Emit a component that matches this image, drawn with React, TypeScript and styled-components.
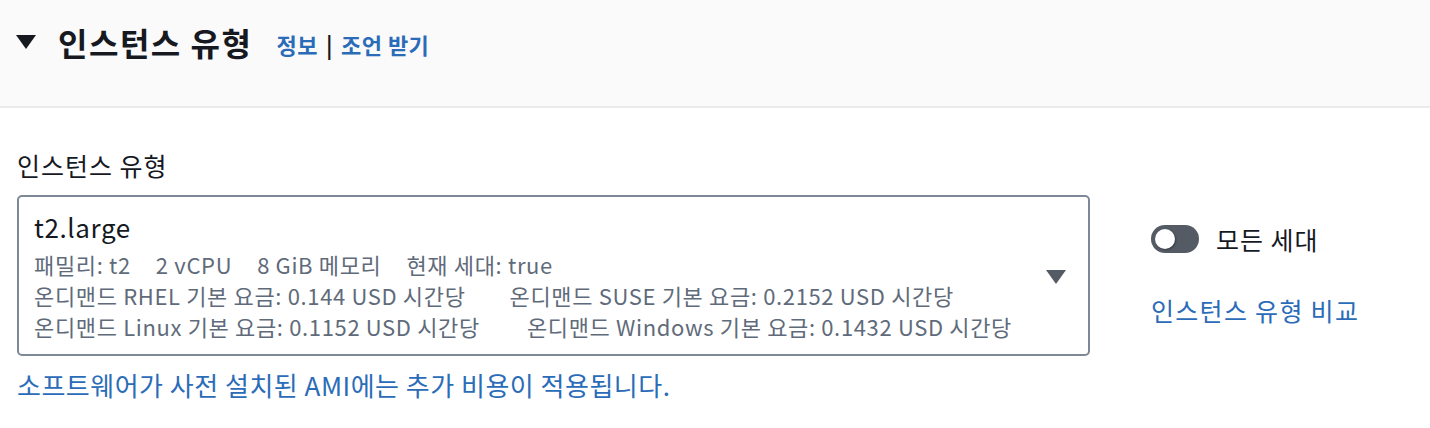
import styled, { createGlobalStyle } from "styled-components";

const GlobalStyle = createGlobalStyle`
  body {
    margin: 0;
    background: #ffffff;
    font-family: "Noto Sans CJK KR", "Noto Sans", sans-serif;
    color: #16191f;
  }
`;

const Header = styled.div`
  height: 108px;
  box-sizing: border-box;
  background: #fafafa;
  border-bottom: 2px solid #e9ebed;
  padding: 22px 16px 0;
`;

const HeaderRow = styled.div`
  display: flex;
  align-items: center;
  height: 40px;
`;

const Caret = styled.span`
  width: 0;
  height: 0;
  border-left: 10px solid transparent;
  border-right: 10px solid transparent;
  border-top: 14px solid #16191f;
  margin-right: 22px;
`;

const Title = styled.h2`
  margin: 0;
  font-size: 32px;
  font-weight: 700;
  line-height: 40px;
  letter-spacing: 1.5px;
  color: #16191f;
`;

const HeaderLinks = styled.div`
  margin-left: 24px;
  font-size: 22px;
  font-weight: 700;
  letter-spacing: 0.5px;
  display: flex;
  align-items: center;
  gap: 8px;
  padding-top: 4px;
`;

const Link = styled.a`
  color: #2b6cb8;
  text-decoration: none;
  cursor: pointer;
`;

const Sep = styled.span`
  color: #16191f;
`;

const Body = styled.div`
  display: flex;
  padding: 41px 17px 0;
`;

const Field = styled.div`
  width: 1073px;
`;

const Label = styled.div`
  font-size: 25px;
  line-height: 32px;
  letter-spacing: 1px;
  margin-bottom: 14px;
`;

const SelectBox = styled.div`
  position: relative;
  box-sizing: border-box;
  border: 2px solid #7d8998;
  border-radius: 5px;
  padding: 14px 60px 12px 15px;
`;

const Value = styled.div`
  font-size: 26px;
  line-height: 32px;
  letter-spacing: 0.6px;
  color: #16191f;
  margin-bottom: 6px;
`;

const DetailLine = styled.div<{ $gap: number }>`
  display: flex;
  gap: ${(p) => p.$gap}px;
  font-size: 22px;
  line-height: 31px;
  letter-spacing: 0.65px;
  color: #5f6b7a;
  white-space: nowrap;
`;

const DropCaret = styled.span`
  position: absolute;
  right: 22px;
  top: 50%;
  margin-top: -6px;
  width: 0;
  height: 0;
  border-left: 10px solid transparent;
  border-right: 10px solid transparent;
  border-top: 14px solid #545b64;
`;

const Note = styled.div`
  margin-top: 13px;
  font-size: 26px;
  line-height: 32px;
  letter-spacing: 0.5px;
`;

const Side = styled.div`
  margin-left: 61px;
  padding-top: 72px;
  display: flex;
  flex-direction: column;
`;

const ToggleRow = styled.label`
  display: flex;
  align-items: center;
  gap: 17px;
  font-size: 25px;
  letter-spacing: 1px;
  color: #16191f;
`;

const Track = styled.span`
  position: relative;
  width: 48px;
  height: 28px;
  border-radius: 14px;
  background: #545b64;
`;

const Knob = styled.span`
  position: absolute;
  left: 4px;
  top: 4px;
  width: 20px;
  height: 20px;
  border-radius: 50%;
  background: #ffffff;
  box-shadow: 1px 1px 2px rgba(0, 0, 0, 0.35);
`;

const SideLink = styled.div`
  margin-top: 37px;
  font-size: 25px;
  line-height: 32px;
  letter-spacing: 1.3px;
`;

const details: { gap: number; items: string[] }[] = [
  { gap: 25, items: ["패밀리: t2", "2 vCPU", "8 GiB 메모리", "현재 세대: true"] },
  {
    gap: 44,
    items: ["온디맨드 RHEL 기본 요금: 0.144 USD 시간당", "온디맨드 SUSE 기본 요금: 0.2152 USD 시간당"],
  },
  {
    gap: 47,
    items: ["온디맨드 Linux 기본 요금: 0.1152 USD 시간당", "온디맨드 Windows 기본 요금: 0.1432 USD 시간당"],
  },
];

export default function App() {
  return (
    <>
      <GlobalStyle />
      <Header>
        <HeaderRow>
          <Caret />
          <Title>인스턴스 유형</Title>
          <HeaderLinks>
            <Link>정보</Link>
            <Sep>|</Sep>
            <Link>조언 받기</Link>
          </HeaderLinks>
        </HeaderRow>
      </Header>
      <Body>
        <Field>
          <Label>인스턴스 유형</Label>
          <SelectBox>
            <Value>t2.large</Value>
            {details.map((line, i) => (
              <DetailLine key={i} $gap={line.gap}>
                {line.items.map((t) => (
                  <span key={t}>{t}</span>
                ))}
              </DetailLine>
            ))}
            <DropCaret />
          </SelectBox>
          <Note>
            <Link>소프트웨어가 사전 설치된 AMI에는 추가 비용이 적용됩니다.</Link>
          </Note>
        </Field>
        <Side>
          <ToggleRow>
            <Track>
              <Knob />
            </Track>
            모든 세대
          </ToggleRow>
          <SideLink>
            <Link>인스턴스 유형 비교</Link>
          </SideLink>
        </Side>
      </Body>
    </>
  );
}
